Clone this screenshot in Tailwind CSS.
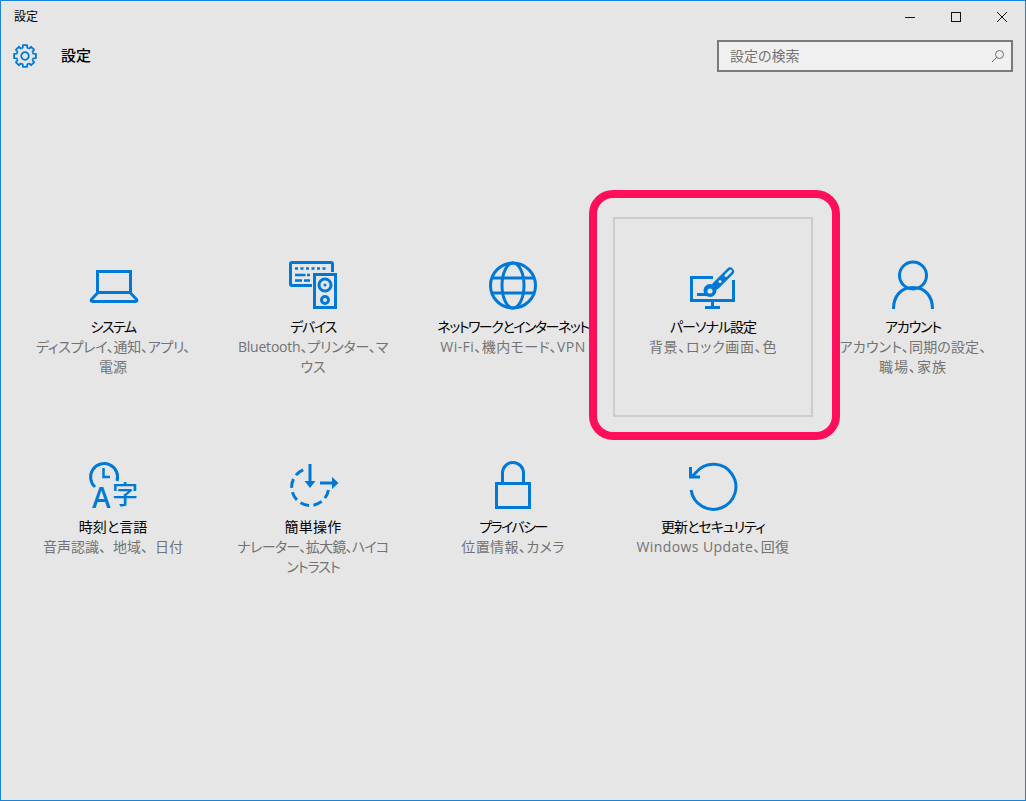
<!DOCTYPE html>
<html lang="ja">
  <head>
    <meta charset="UTF-8" />
    <title>設定</title>
    <script src="https://cdn.jsdelivr.net/npm/@tailwindcss/browser@4"></script>
  </head>
  <body class="overflow-hidden font-['Open_Sans','Noto_Sans_CJK_JP',sans-serif] [font-feature-settings:'palt'] text-black">
    <div class="relative flex h-[801px] w-[1026px] flex-col border border-[#1883d7] bg-[#e6e6e6]">
      <!-- title bar -->
      <div class="flex h-[31px] shrink-0 items-center justify-between">
        <span class="ml-[13px] text-[12px] leading-[30px]">設定</span>
        <div class="flex">
          <div class="flex h-[31px] w-[46px] items-center justify-center">
            <svg width="10" height="10" viewBox="0 0 10 10"><path d="M0 5.5H10" stroke="#111" fill="none" /></svg>
          </div>
          <div class="flex h-[31px] w-[46px] items-center justify-center">
            <svg width="10" height="10" viewBox="0 0 10 10"><rect x="0.5" y="0.5" width="9" height="9" stroke="#111" fill="none" /></svg>
          </div>
          <div class="flex h-[31px] w-[46px] items-center justify-center">
            <svg width="10" height="10" viewBox="0 0 10 10"><path d="M0 0L10 10M10 0L0 10" stroke="#111" fill="none" /></svg>
          </div>
        </div>
      </div>

      <!-- header -->
      <div class="mt-[8px] flex h-[32px] shrink-0 items-center justify-between px-[12px]">
        <div class="flex items-center">
          <svg width="24" height="24" viewBox="-12 -12 24 24" fill="none" stroke="#0078d7" stroke-width="1.8" stroke-linejoin="round">
            <circle r="3.8" />
            <path d="M-3.29 -7.95L-2.3 -8.31L-2.1 -10.9H2.1L2.3 -8.31L3.29 -7.95" />
            <path transform="rotate(45)" d="M-3.29 -7.95L-2.3 -8.31L-2.1 -10.9H2.1L2.3 -8.31L3.29 -7.95" />
            <path transform="rotate(90)" d="M-3.29 -7.95L-2.3 -8.31L-2.1 -10.9H2.1L2.3 -8.31L3.29 -7.95" />
            <path transform="rotate(135)" d="M-3.29 -7.95L-2.3 -8.31L-2.1 -10.9H2.1L2.3 -8.31L3.29 -7.95" />
            <path transform="rotate(180)" d="M-3.29 -7.95L-2.3 -8.31L-2.1 -10.9H2.1L2.3 -8.31L3.29 -7.95" />
            <path transform="rotate(225)" d="M-3.29 -7.95L-2.3 -8.31L-2.1 -10.9H2.1L2.3 -8.31L3.29 -7.95" />
            <path transform="rotate(270)" d="M-3.29 -7.95L-2.3 -8.31L-2.1 -10.9H2.1L2.3 -8.31L3.29 -7.95" />
            <path transform="rotate(315)" d="M-3.29 -7.95L-2.3 -8.31L-2.1 -10.9H2.1L2.3 -8.31L3.29 -7.95" />
          </svg>
          <span class="-mt-[2px] ml-[24px] text-[15px] font-medium">設定</span>
        </div>
        <div class="flex h-[32px] w-[296px] items-center justify-between border-2 border-[#7a7a7a] bg-[#f0f0f0] pl-[11px] pr-[6px]">
          <span class="-mt-[2px] text-[14px] text-[#737373]">設定の検索</span>
          <svg width="14" height="14" viewBox="0 0 14 14" fill="none" stroke="#6d6d6d">
            <circle cx="8.5" cy="5.5" r="4" />
            <path d="M5.6 8.4L1 13" />
          </svg>
        </div>
      </div>

      <!-- tiles -->
      <div class="ml-[12px] mt-[145px] grid grid-cols-[repeat(5,200px)] grid-rows-[repeat(2,200px)]">
        <div class="flex flex-col items-center border-2 border-transparent pt-[42px] text-center text-[14px] leading-[20px]">
          <svg class="h-[48px] w-[48px] overflow-visible" viewBox="0 0 48 48" fill="none" stroke="#0078d7" stroke-width="3">
            <rect x="8.5" y="10.5" width="33" height="21" />
            <path d="M8.5 32L2.6 38.3Q1.4 40.5 3.5 40.5H46.5Q48.6 40.5 47.4 38.3L41.5 32" />
          </svg>
          <div class="mt-[8px] whitespace-nowrap tracking-[-1.5px]">システム</div>
          <div class="whitespace-nowrap text-[#737373]"><div class="tracking-[-0.3px]">ディスプレイ、通知、アプリ、</div><div>電源</div></div>
        </div>

        <div class="flex flex-col items-center border-2 border-transparent pt-[42px] text-center text-[14px] leading-[20px]">
          <svg class="h-[48px] w-[48px] overflow-visible" viewBox="0 0 48 48" fill="none" stroke="#0078d7" stroke-width="3">
            <path d="M23 24.5H3Q1.5 24.5 1.5 23V3Q1.5 1.5 3 1.5H42Q43.5 1.5 43.5 3V11" />
            <rect x="25.5" y="13.5" width="21" height="33" />
            <circle cx="36" cy="24" r="6" />
            <circle cx="36" cy="39" r="3.5" />
            <path d="M6 7.5H9M11.5 7.5H14.5M17 7.5H20M22.5 7.5H25.5M28 7.5H31M33.5 7.5H36.5M6 14H16.5M18 14H21M6 19.5H13M15 19.5H21" stroke-width="2.5" />
            <circle cx="36" cy="24" r="1.5" fill="#0078d7" stroke="none" />
          </svg>
          <div class="mt-[8px] whitespace-nowrap tracking-[-1.25px]">デバイス</div>
          <div class="whitespace-nowrap text-[#737373]"><div class="tracking-[-0.2px]">Bluetooth、プリンター、マ</div><div>ウス</div></div>
        </div>

        <div class="flex flex-col items-center border-2 border-transparent pt-[42px] text-center text-[14px] leading-[20px]">
          <svg class="h-[48px] w-[48px] overflow-visible" viewBox="0 0 48 48" fill="none" stroke="#0078d7" stroke-width="3">
            <circle cx="24" cy="24.5" r="22.5" />
            <ellipse cx="24" cy="24.5" rx="11" ry="22.5" />
            <path d="M3.5 17H44.5M3.5 32H44.5" />
          </svg>
          <div class="mt-[8px] whitespace-nowrap tracking-[-1.5px]">ネットワークとインターネット</div>
          <div class="whitespace-nowrap tracking-[0.45px] text-[#737373]">Wi-Fi、機内モード、VPN</div>
        </div>

        <div class="flex flex-col items-center border-2 border-[#cccccc] pt-[42px] text-center text-[14px] leading-[20px]">
          <svg class="h-[48px] w-[48px] overflow-visible" viewBox="0 0 48 48" fill="none" stroke="#0078d7" stroke-width="3">
            <path d="M24 16.5H2.5V39.5H44.5V19" />
            <path d="M23.5 41V46M16 46.5H31" />
            <path d="M8 33.5H21" />
            <path d="M41 10.5L27 24.5" stroke-width="8" stroke-linecap="round" />
            <circle cx="21" cy="29.5" r="6.5" fill="#0078d7" stroke="none" />
            <path d="M41.5 10L37 14.5" stroke="#e6e6e6" stroke-width="3" stroke-linecap="round" />
            <circle cx="21" cy="30" r="2.6" fill="#e6e6e6" stroke="none" />
            <circle cx="31" cy="20.5" r="1.5" fill="#e6e6e6" stroke="none" />
          </svg>
          <div class="mt-[8px] whitespace-nowrap tracking-[-1px]">パーソナル設定</div>
          <div class="whitespace-nowrap tracking-[0.7px] text-[#737373]">背景、ロック画面、色</div>
        </div>

        <div class="flex flex-col items-center border-2 border-transparent pt-[42px] text-center text-[14px] leading-[20px]">
          <svg class="h-[48px] w-[48px] overflow-visible" viewBox="0 0 48 48" fill="none" stroke="#0078d7" stroke-width="3">
            <circle cx="24" cy="14.5" r="13.5" />
            <path d="M4.5 48C4.5 35 12 26.5 24 26.5S43.5 35 43.5 48" />
          </svg>
          <div class="mt-[8px] whitespace-nowrap tracking-[-1.2px]">アカウント</div>
          <div class="whitespace-nowrap text-[#737373]"><div class="tracking-[0.15px]">アカウント、同期の設定、</div><div class="tracking-[1px]">職場、家族</div></div>
        </div>

        <div class="flex flex-col items-center border-2 border-transparent pt-[42px] text-center text-[14px] leading-[20px]">
          <svg class="h-[48px] w-[48px] overflow-visible" viewBox="0 0 48 48" fill="none" stroke="#0078d7" stroke-width="3">
            <path d="M6 26A13.5 13.5 0 1 1 28 20" />
            <path d="M14.5 7V16H21" stroke-width="2.5" />
            <text x="3" y="47" font-size="28" font-weight="600" fill="#0078d7" stroke="none" font-family="Open Sans">A</text>
            <text x="23" y="43" font-size="26" font-weight="500" fill="#0078d7" stroke="none" font-family="Noto Sans CJK JP">字</text>
          </svg>
          <div class="mt-[8px] whitespace-nowrap">時刻と言語</div>
          <div class="whitespace-nowrap text-[#737373] [font-feature-settings:normal]">音声認識、地域、日付</div>
        </div>

        <div class="flex flex-col items-center border-2 border-transparent pt-[42px] text-center text-[14px] leading-[20px]">
          <svg class="h-[48px] w-[48px] overflow-visible" viewBox="0 0 48 48" fill="none" stroke="#0078d7" stroke-width="3">
            <path d="M39.4 29A18.5 18.5 0 1 1 16 8.2" stroke-dasharray="9 4.5" />
            <path d="M21 3V21M31 22H43" />
            <path d="M15.5 20H26.5L21 27ZM43 16V28L49.5 22Z" fill="#0078d7" stroke="none" />
          </svg>
          <div class="mt-[8px] whitespace-nowrap tracking-[0.3px]">簡単操作</div>
          <div class="whitespace-nowrap text-[#737373]"><div class="tracking-[-0.7px]">ナレーター、拡大鏡、ハイコ</div><div class="tracking-[-1px]">ントラスト</div></div>
        </div>

        <div class="flex flex-col items-center border-2 border-transparent pt-[42px] text-center text-[14px] leading-[20px]">
          <svg class="h-[48px] w-[48px] overflow-visible" viewBox="0 0 48 48" fill="none" stroke="#0078d7" stroke-width="3">
            <rect x="7.5" y="22.5" width="33" height="24" />
            <path d="M13.5 21V12A10.5 10.5 0 0 1 34.5 12V21" />
          </svg>
          <div class="mt-[8px] whitespace-nowrap tracking-[-1.6px]">プライバシー</div>
          <div class="whitespace-nowrap tracking-[0.4px] text-[#737373]">位置情報、カメラ</div>
        </div>

        <div class="flex flex-col items-center border-2 border-transparent pt-[42px] text-center text-[14px] leading-[20px]">
          <svg class="h-[48px] w-[48px] overflow-visible" viewBox="0 0 48 48" fill="none" stroke="#0078d7" stroke-width="3">
            <path d="M2.1 29A22.5 22.5 0 1 0 7.7 10.7L2.5 16" />
            <path d="M1.5 6V16H11" />
          </svg>
          <div class="mt-[8px] whitespace-nowrap tracking-[-1px]">更新とセキュリティ</div>
          <div class="whitespace-nowrap tracking-[0.4px] text-[#737373]">Windows Update、回復</div>
        </div>
      </div>

      <!-- callout over the selected tile -->
      <div class="absolute left-[588px] top-[189px] h-[250px] w-[251px] rounded-[24px] border-[8px] border-[#ff0f5a]"></div>
    </div>
  </body>
</html>
